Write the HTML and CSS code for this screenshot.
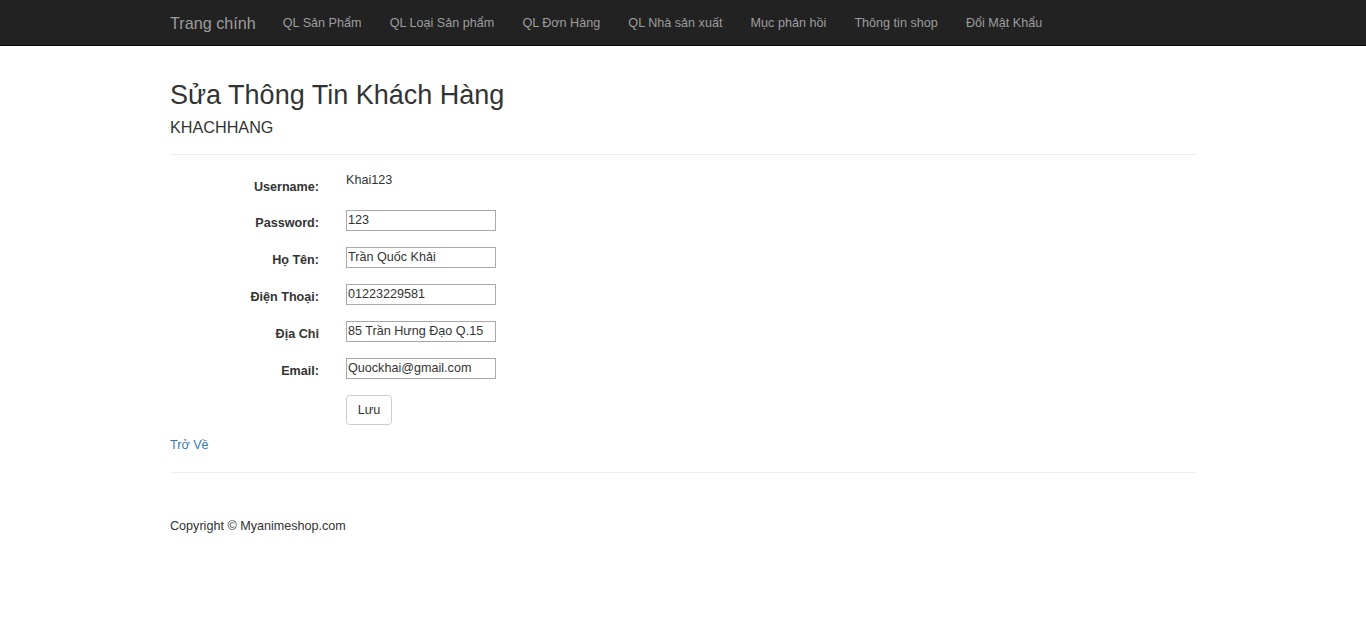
FILE: index.html
```html
<!DOCTYPE html>
<html lang="vi">
<head>
<meta charset="utf-8">
<title>Sửa Thông Tin Khách Hàng</title>
<link rel="stylesheet" href="styles.css">
</head>
<body>
<nav class="navbar">
  <div class="container nav-inner">
    <a class="brand" href="#">Trang chính</a>
    <ul class="nav">
      <li><a href="#">QL Sản Phẩm</a></li>
      <li><a href="#">QL Loại Sản phẩm</a></li>
      <li><a href="#">QL Đơn Hàng</a></li>
      <li><a href="#">QL Nhà sản xuất</a></li>
      <li><a href="#">Mục phản hồi</a></li>
      <li><a href="#">Thông tin shop</a></li>
      <li><a href="#">Đổi Mật Khẩu</a></li>
    </ul>
  </div>
</nav>
<main class="container body-content">
  <h2 class="title">Sửa Thông Tin Khách Hàng</h2>
  <h4 class="subtitle">KHACHHANG</h4>
  <hr class="rule rule-top">
  <form class="form">
    <div class="form-group">
      <label class="control-label">Username:</label>
      <div class="field"><span class="value">Khai123</span></div>
    </div>
    <div class="form-group">
      <label class="control-label">Password:</label>
      <div class="field"><input class="text-input" type="text" value="123"></div>
    </div>
    <div class="form-group">
      <label class="control-label">Họ Tên:</label>
      <div class="field"><input class="text-input" type="text" value="Trần Quốc Khải"></div>
    </div>
    <div class="form-group">
      <label class="control-label">Điện Thoại:</label>
      <div class="field"><input class="text-input" type="text" value="01223229581"></div>
    </div>
    <div class="form-group">
      <label class="control-label">Địa Chỉ</label>
      <div class="field"><input class="text-input" type="text" value="85 Trần Hưng Đạo Q.15"></div>
    </div>
    <div class="form-group">
      <label class="control-label">Email:</label>
      <div class="field"><input class="text-input" type="text" value="Quockhai@gmail.com"></div>
    </div>
    <div class="form-group">
      <span class="control-label"></span>
      <div class="field"><button class="btn" type="button">Lưu</button></div>
    </div>
  </form>
  <div class="back"><a href="#">Trở Về</a></div>
  <hr class="rule">
  <footer class="footer">
    <p>Copyright © Myanimeshop.com</p>
  </footer>
</main>
</body>
</html>
```
FILE: styles.css
```css
* { box-sizing: border-box; }
html, body { margin: 0; padding: 0; }
body {
  font-family: "Liberation Sans", Arial, sans-serif;
  font-size: 12.6px;
  line-height: 18px;
  color: #333;
  background: #fff;
}
a { color: #337ab7; text-decoration: none; }
.container { width: 1026px; margin: 0 auto; }

.navbar {
  background: #222;
  border-bottom: 1px solid #080808;
  height: 46px;
}
.nav-inner { display: flex; align-items: flex-start; }
.brand {
  display: block;
  color: #9d9d9d;
  font-size: 16.2px;
  line-height: 18px;
  padding: 13.5px 13.5px 13.5px 0;
}
.nav { display: flex; list-style: none; margin: 0; padding: 0; }
.nav a {
  display: block;
  color: #9d9d9d;
  padding: 13.5px 14.1px;
  line-height: 18px;
}
.nav li:first-child a { padding-left: 13.5px; }

.title {
  font-size: 27px;
  font-weight: 500;
  line-height: 29.7px;
  margin: 34.5px 0 0;
}
.subtitle {
  font-size: 16.2px;
  font-weight: 500;
  line-height: 17.8px;
  margin: 8.6px 0 0;
}
.rule {
  border: 0;
  border-top: 1px solid #eee;
  margin: 18px 0;
}
.rule-top { margin-top: 17px; }
.form { margin-top: 1px; }
.form-group {
  display: flex;
  align-items: flex-start;
  margin-bottom: 13.5px;
  min-height: 23.4px;
}
.control-label {
  width: 149px;
  text-align: right;
  font-weight: bold;
  padding-top: 5px;
  line-height: 18px;
}
.field { margin-left: 27px; }
.value { display: block; line-height: 18px; margin-top: -2px; }
.text-input {
  display: block;
  width: 150px;
  height: 21px;
  margin: 1px 0 0;
  padding: 0 1px 1px;
  border: 1px solid #a9a9a9;
  font-family: inherit;
  font-size: 12.6px;
  line-height: 18px;
  color: #333;
  background: #fff;
}
.btn {
  display: block;
  height: 30px;
  margin: 1px 0 0;
  padding: 0 10.8px;
  font-family: inherit;
  font-size: 12.6px;
  line-height: 18px;
  color: #333;
  background: #fff;
  border: 1px solid #ccc;
  border-radius: 3.6px;
}
.back { line-height: 18px; margin-top: -2px; }
.footer p { margin: 44px 0 0; line-height: 18px; }
```
